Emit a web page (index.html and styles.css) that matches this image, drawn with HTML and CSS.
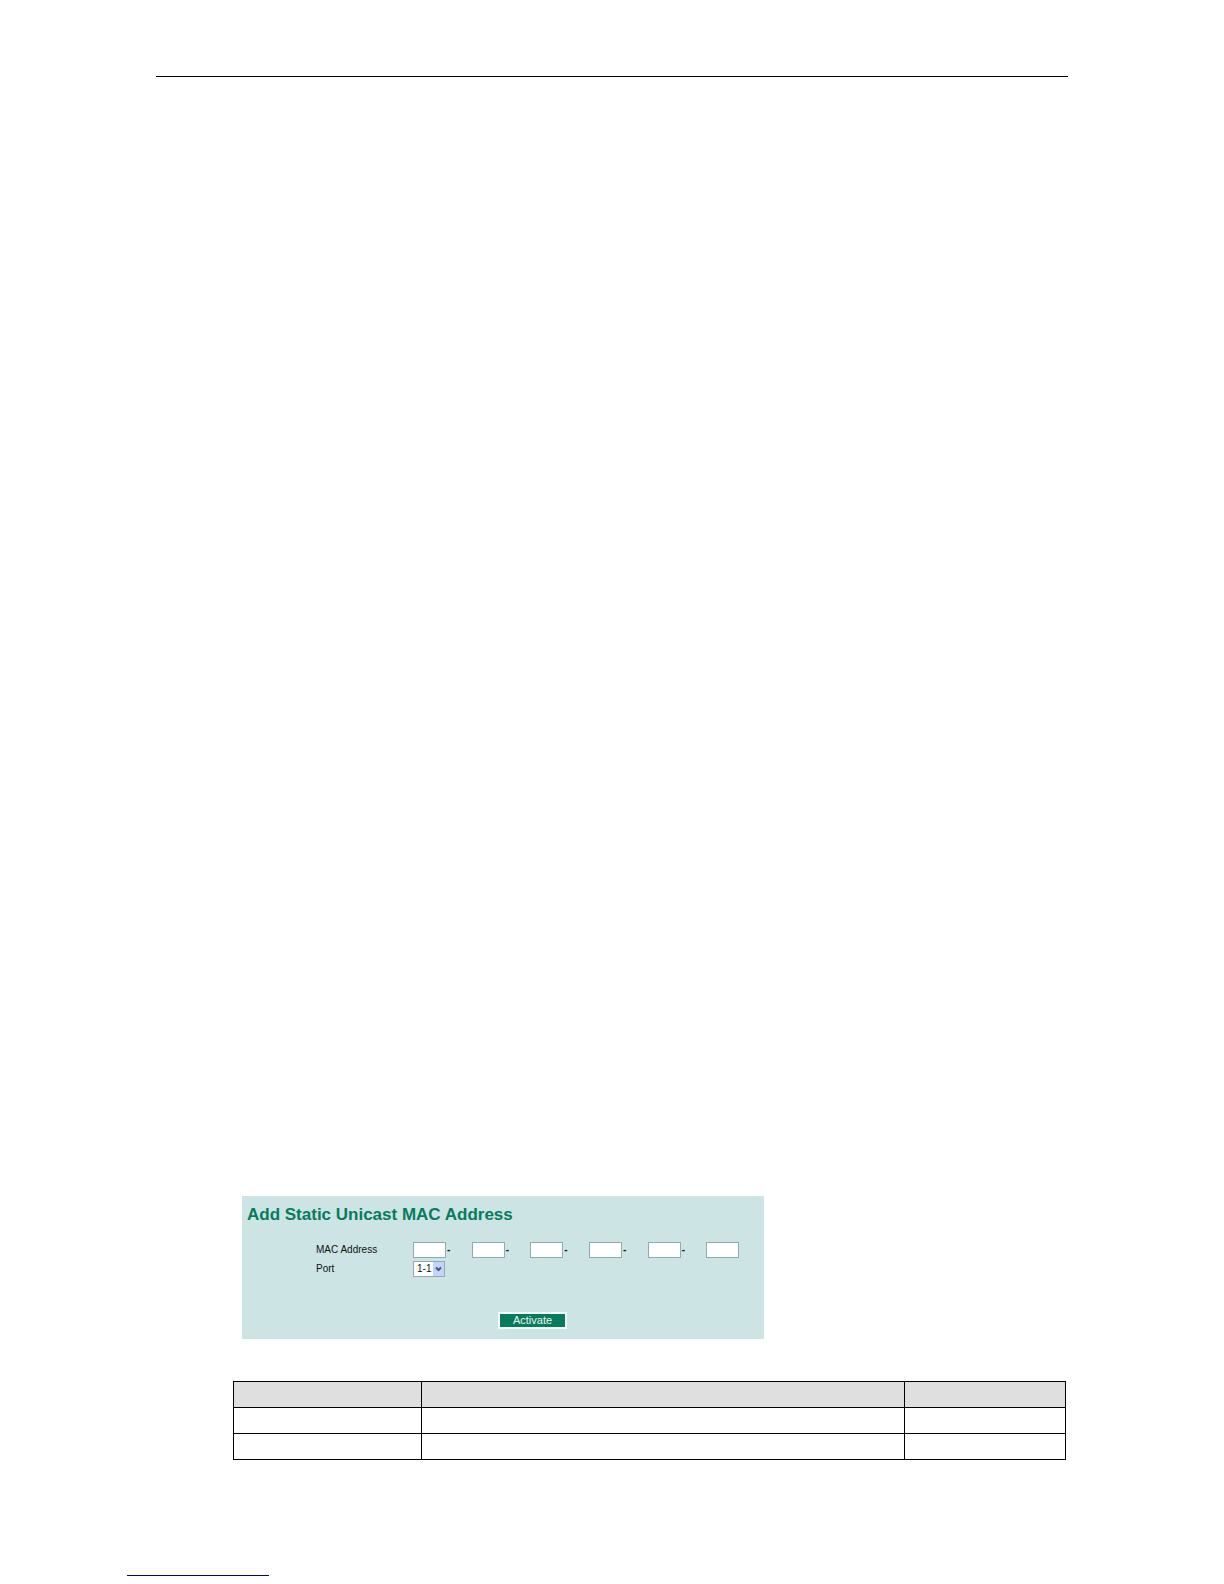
FILE: index.html
```html
<!DOCTYPE html>
<html lang="en">
<head>
<meta charset="utf-8">
<meta name="viewport" content="width=device-width, initial-scale=1">
<title>Add Static Unicast MAC Address</title>
<link rel="stylesheet" href="styles.css">
</head>
<body>
<div class="page">
  <header class="page-header"></header>
  <main class="content">
    <form class="panel">
      <h1 class="panel-title">Add Static Unicast MAC Address</h1>
      <div class="field">
        <label class="field-label" for="mac1">MAC Address</label>
        <div class="mac">
          <span class="octet"><input class="box" id="mac1" type="text" maxlength="2">-</span>
          <span class="octet"><input class="box" type="text" maxlength="2" aria-label="MAC Address part 2">-</span>
          <span class="octet"><input class="box" type="text" maxlength="2" aria-label="MAC Address part 3">-</span>
          <span class="octet"><input class="box" type="text" maxlength="2" aria-label="MAC Address part 4">-</span>
          <span class="octet"><input class="box" type="text" maxlength="2" aria-label="MAC Address part 5">-</span>
          <span class="octet"><input class="box" type="text" maxlength="2" aria-label="MAC Address part 6"></span>
        </div>
      </div>
      <div class="field">
        <label class="field-label" for="port">Port</label>
        <div class="picker">
          <select class="box port" id="port"><option>1-1</option></select>
          <svg class="arrow" viewBox="0 0 11 14" aria-hidden="true"><rect width="11" height="14" rx="1" fill="#c3d3fb"/><path d="M3 5.5 5.5 8 8 5.5" fill="none" stroke="#43587f" stroke-width="2"/></svg>
        </div>
      </div>
      <button class="activate" type="button">Activate</button>
    </form>
    <table class="settings">
      <thead><tr><th class="col-setting"></th><th class="col-description"></th><th class="col-default"></th></tr></thead>
      <tbody>
        <tr><td></td><td></td><td></td></tr>
        <tr><td></td><td></td><td></td></tr>
      </tbody>
    </table>
  </main>
  <footer class="page-footer"></footer>
</div>
</body>
</html>
```
FILE: styles.css
```css
* { box-sizing: border-box; }

body {
  margin: 0;
  background: #fff;
  color: #111;
  font-family: "Liberation Sans", Arial, sans-serif;
}

.page {
  display: flex;
  flex-direction: column;
  min-height: 100vh;
  padding: 76px 156px 8px;
}

.page-header { border-top: 1px solid #000; }

.content {
  margin-top: auto;
  padding: 0 2px 0 77px;
}

.panel {
  display: flex;
  flex-direction: column;
  max-width: 522px;
  margin-left: 9px;
  padding: 9px 5px 10px;
  background: #cce5e4;
}

.panel-title {
  margin: 0 0 17px;
  color: #087b5d;
  font-size: 17px;
  line-height: 20px;
}

.field {
  display: grid;
  grid-template-columns: 97px 1fr;
  align-items: center;
  height: 16px;
  margin: 0 0 3px 69px;
  font-size: 10px;
  line-height: 16px;
}

.mac {
  display: grid;
  grid-template-columns: repeat(6, 1fr);
  max-width: 352px;
  margin-right: -10px;
}

.octet {
  display: flex;
  align-items: center;
  gap: 1px;
  font-weight: bold;
}

.box {
  width: 33px;
  height: 16px;
  margin: 0;
  padding: 0 3px;
  border: 1px solid #8eabb2;
  border-radius: 0;
  background: #fff;
  color: #111;
  font: 10px/14px "Liberation Sans", Arial, sans-serif;
}

.picker {
  position: relative;
  width: 32px;
  height: 16px;
}

.port {
  display: block;
  width: 32px;
  appearance: none;
}

.arrow {
  position: absolute;
  top: 1px;
  right: 1px;
  width: 11px;
  height: 14px;
  pointer-events: none;
}

.activate {
  align-self: center;
  width: 69px;
  height: 17px;
  margin: 32px 0 0 59px;
  padding: 0;
  border: 2px solid #f2fbfa;
  background: #087b5d;
  color: #e4f7f0;
  font: 11px/13px "Liberation Sans", Arial, sans-serif;
}

.settings {
  width: 100%;
  margin-top: 42px;
  border-collapse: collapse;
  table-layout: fixed;
}

.settings th,
.settings td {
  height: 26px;
  padding: 0;
  border: 1px solid #000;
}

.settings th { background: #dfdfdf; }

.col-setting { width: 22.6%; }
.col-description { width: 58%; }

.page-footer {
  width: 142px;
  margin: 115px 0 0 -29px;
  border-top: 1px solid #000096;
}
```
